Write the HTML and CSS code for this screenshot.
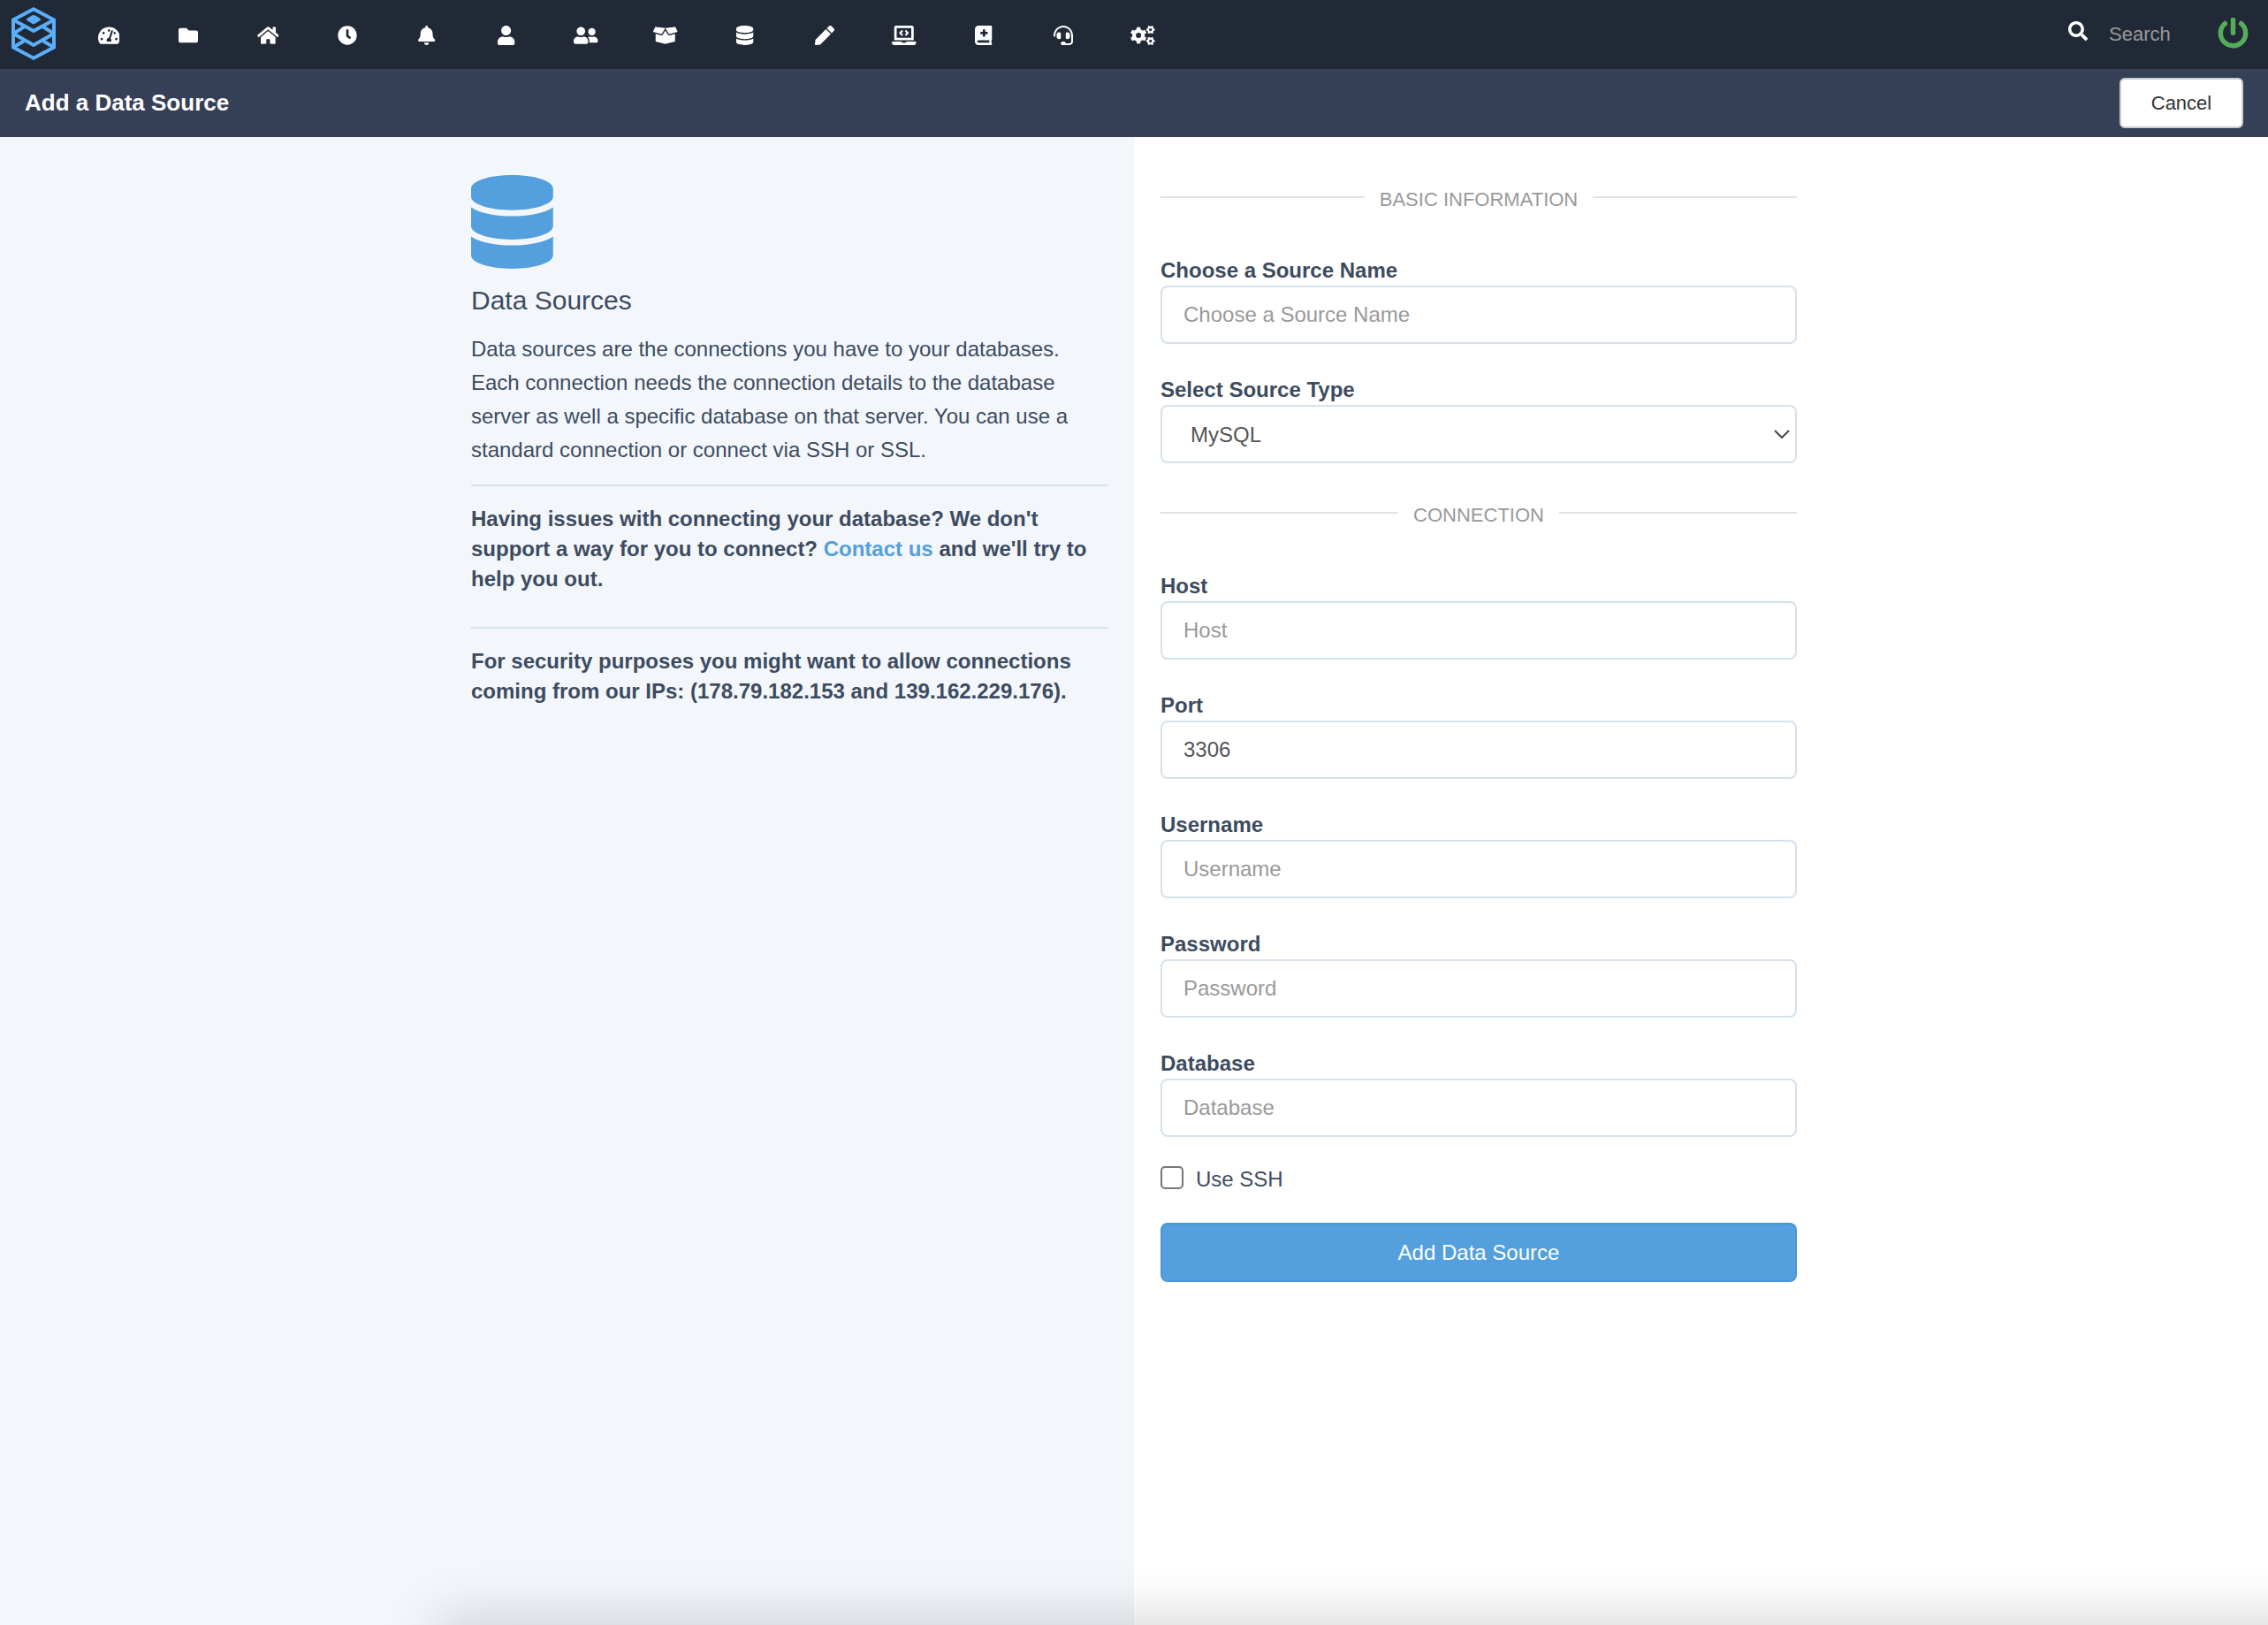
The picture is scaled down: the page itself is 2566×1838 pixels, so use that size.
FILE: index.html
```
<!DOCTYPE html>
<html lang="en">
<head>
    <meta charset="UTF-8">
    <meta name="viewport" content="width=device-width, initial-scale=1.0">
    <title>Add a Data Source</title>
    <link rel="stylesheet" href="styles.css">
</head>
<body>

<header class="topbar">
    <a href="#" class="logo" aria-label="Home">
        <svg viewBox="0 0 50 60">
            <g fill="none" stroke="currentColor" stroke-width="4">
                <path d="M25 2.3L48 14.5V45.5L25 57.7L2 45.5V14.5Z"/>
                <path d="M2 14.5L25 27L48 14.5"/>
                <path d="M14 22.5L2 30L25 43L48 30L36 22.5"/>
                <path d="M14 38.5L2 45.5M36 38.5L48 45.5"/>
            </g>
            <path fill="currentColor" d="M17.5 13L23 9.6Q25 8.5 27 9.6L32.5 13Q34 14 32.5 15L27 18.6Q25 20 23 18.6L17.5 15Q16 14 17.5 13Z"/>
        </svg>
    </a>
    <nav class="main-nav">
        <a href="#" aria-label="Dashboards"><svg viewBox="0 0 576 512"><path d="M288 32C128.94 32 0 160.94 0 320c0 52.8 14.25 102.26 39.06 144.8 5.61 9.62 16.3 15.2 27.44 15.2h443c11.14 0 21.83-5.58 27.44-15.2C561.75 422.26 576 372.8 576 320c0-159.06-128.94-288-288-288zm0 64c14.71 0 26.58 10.13 30.32 23.65-1.11 2.26-2.64 4.23-3.45 6.67l-9.22 27.67c-5.13 3.49-10.97 6.01-17.64 6.01-17.67 0-32-14.33-32-32S270.33 96 288 96zM96 384c-17.67 0-32-14.33-32-32s14.33-32 32-32 32 14.33 32 32-14.33 32-32 32zm48-160c-17.67 0-32-14.33-32-32s14.33-32 32-32 32 14.33 32 32-14.33 32-32 32zm246.77-72.41l-61.33 184C343.13 347.33 352 364.54 352 384c0 11.72-3.38 22.55-8.88 32H232.88c-5.5-9.45-8.88-20.28-8.88-32 0-33.94 26.5-61.43 59.9-63.59l61.34-184.01c4.17-12.56 17.73-19.45 30.36-15.17 12.57 4.19 19.35 17.79 15.17 30.36zm14.66 57.2l15.52-46.55c3.47-1.29 7.13-2.23 11.05-2.23 17.67 0 32 14.33 32 32s-14.33 32-32 32c-11.38-.01-20.89-6.28-26.57-15.22zM480 384c-17.67 0-32-14.33-32-32s14.33-32 32-32 32 14.33 32 32-14.33 32-32 32z"/></svg></a>
        <a href="#" aria-label="Folders"><svg viewBox="0 0 512 512"><path d="M464 128H272l-64-64H48C21.49 64 0 85.49 0 112v288c0 26.51 21.49 48 48 48h416c26.51 0 48-21.49 48-48V176c0-26.51-21.49-48-48-48z"/></svg></a>
        <a href="#" aria-label="Home page"><svg viewBox="0 0 576 512"><path d="M280.37 148.26L96 300.11V464a16 16 0 0 0 16 16l112.06-.29a16 16 0 0 0 15.92-16V368a16 16 0 0 1 16-16h64a16 16 0 0 1 16 16v95.64a16 16 0 0 0 16 16.05L464 480a16 16 0 0 0 16-16V300L295.67 148.26a12.19 12.19 0 0 0-15.3 0zM571.6 251.47L488 182.56V44.05a12 12 0 0 0-12-12h-56a12 12 0 0 0-12 12v72.61L318.47 43a48 48 0 0 0-61 0L4.34 251.47a12 12 0 0 0-1.6 16.9l25.5 31A12 12 0 0 0 45.15 301l235.22-193.74a12.19 12.19 0 0 1 15.3 0L530.9 301a12 12 0 0 0 16.9-1.6l25.5-31a12 12 0 0 0-1.7-16.93z"/></svg></a>
        <a href="#" aria-label="Schedules"><svg viewBox="0 0 512 512"><path d="M256,8C119,8,8,119,8,256S119,504,256,504,504,393,504,256,393,8,256,8Zm92.49,313h0l-20,25a16,16,0,0,1-22.49,2.5h0l-67-49.72a40,40,0,0,1-15-31.23V112a16,16,0,0,1,16-16h32a16,16,0,0,1,16,16V256l58,42.5A16,16,0,0,1,348.49,321Z"/></svg></a>
        <a href="#" aria-label="Alerts"><svg viewBox="0 0 448 512"><path d="M224 512c35.32 0 63.97-28.65 63.97-64H160.03c0 35.35 28.65 64 63.97 64zm215.39-149.71c-19.32-20.76-55.47-51.99-55.47-154.29 0-77.7-54.48-139.9-127.94-155.16V32c0-17.67-14.32-32-31.98-32s-31.98 14.33-31.98 32v20.84C118.56 68.1 64.08 130.3 64.08 208c0 102.3-36.15 133.53-55.47 154.29-6 6.45-8.66 14.16-8.61 21.71.11 16.4 12.98 32 32.1 32h383.8c19.12 0 32-15.6 32.1-32 .05-7.55-2.61-15.27-8.61-21.71z"/></svg></a>
        <a href="#" aria-label="Users"><svg viewBox="0 0 448 512"><path d="M224 256c70.7 0 128-57.3 128-128S294.7 0 224 0 96 57.3 96 128s57.3 128 128 128zm89.6 32h-16.7c-22.2 10.2-46.9 16-72.9 16s-50.6-5.8-72.9-16h-16.7C60.2 288 0 348.2 0 422.4V464c0 26.5 21.5 48 48 48h352c26.5 0 48-21.5 48-48v-41.6c0-74.2-60.2-134.4-134.4-134.4z"/></svg></a>
        <a href="#" aria-label="Groups"><svg viewBox="0 0 640 512"><path d="M192 256c61.9 0 112-50.1 112-112S253.9 32 192 32 80 82.1 80 144s50.1 112 112 112zm76.8 32h-8.3c-20.8 10-43.9 16-68.5 16s-47.6-6-68.5-16h-8.3C51.6 288 0 339.6 0 403.2V432c0 26.5 21.5 48 48 48h288c26.5 0 48-21.5 48-48v-28.8c0-63.6-51.6-115.2-115.2-115.2zM480 256c53 0 96-43 96-96s-43-96-96-96-96 43-96 96 43 96 96 96zm48 32h-3.8c-13.9 4.8-28.6 8-44.2 8s-30.3-3.2-44.2-8H432c-20.4 0-39.2 5.9-55.7 15.4 24.4 26.3 39.7 61.2 39.7 99.8v38.4c0 2.2-.5 4.3-.6 6.4H592c26.5 0 48-21.5 48-48 0-61.9-50.1-112-112-112z"/></svg></a>
        <a href="#" aria-label="Packages"><svg viewBox="0 0 640 512"><path d="M425.7 256c-16.9 0-32.8-9-41.4-23.4L320 126l-64.2 106.6c-8.7 14.5-24.6 23.5-41.5 23.5-4.5 0-9-.6-13.3-1.9L64 215v178c0 14.7 10 27.5 24.2 31l216.2 54.1c10.2 2.5 20.9 2.5 31 0L551.8 424c14.2-3.6 24.2-16.4 24.2-31V215l-137 39.1c-4.3 1.3-8.8 1.9-13.3 1.9zm212.6-112.2L586.8 41c-3.1-6.2-9.8-9.8-16.7-8.9L320 64l91.7 152.1c3.8 6.3 11.4 9.3 18.5 7.3l197.9-56.5c9.9-2.9 14.7-13.9 10.2-23.1zM53.2 41L1.7 143.8c-4.6 9.2.3 20.2 10.1 23l197.9 56.5c7.1 2 14.7-1 18.5-7.3L320 64 69.8 32.1c-6.9-.8-13.5 2.7-16.6 8.9z"/></svg></a>
        <a href="#" aria-label="Data sources"><svg viewBox="0 0 448 512"><path d="M448 73.143v45.714C448 159.143 347.667 192 224 192S0 159.143 0 118.857V73.143C0 32.857 100.333 0 224 0s224 32.857 224 73.143zM448 176v102.857C448 319.143 347.667 352 224 352S0 319.143 0 278.857V176c48.125 33.143 136.208 48.572 224 48.572S399.874 209.143 448 176zm0 160v102.857C448 479.143 347.667 512 224 512S0 479.143 0 438.857V336c48.125 33.143 136.208 48.572 224 48.572S399.874 369.143 448 336z"/></svg></a>
        <a href="#" aria-label="Editor"><svg viewBox="0 0 512 512"><path d="M290.74 93.24l128.02 128.02-277.99 277.99-114.14 12.6C11.35 513.54-1.56 500.62.14 485.34l12.7-114.22 277.9-277.88zm207.2-19.06l-60.11-60.11c-18.75-18.75-49.16-18.75-67.91 0l-56.55 56.55 128.02 128.02 56.55-56.55c18.75-18.76 18.75-49.16 0-67.91z"/></svg></a>
        <a href="#" aria-label="Embedding"><svg viewBox="0 0 640 512"><path d="M255.03 261.65c6.25 6.25 16.38 6.25 22.63 0l11.31-11.31c6.25-6.25 6.25-16.38 0-22.63L253.25 192l35.71-35.72c6.25-6.25 6.25-16.38 0-22.63l-11.31-11.31c-6.25-6.25-16.38-6.25-22.63 0l-58.34 58.34c-6.25 6.25-6.25 16.38 0 22.63l58.35 58.34zm96.01-11.3l11.31 11.31c6.25 6.25 16.38 6.25 22.63 0l58.34-58.34c6.25-6.25 6.25-16.38 0-22.63l-58.34-58.34c-6.25-6.25-16.38-6.25-22.63 0l-11.31 11.31c-6.25 6.25-6.25 16.38 0 22.63L386.75 192l-35.71 35.72c-6.25 6.25-6.25 16.38 0 22.63zM624 416H381.54c-.74 19.81-14.71 32-32.74 32H288c-18.69 0-33.02-17.47-32.77-32H16c-8.8 0-16 7.2-16 16v16c0 35.2 28.8 64 64 64h512c35.2 0 64-28.8 64-64v-16c0-8.8-7.2-16-16-16zM576 48c0-26.4-21.6-48-48-48H112C85.6 0 64 21.6 64 48v336h512V48zm-64 272H128V64h384v256z"/></svg></a>
        <a href="#" aria-label="Documentation"><svg viewBox="0 0 448 512"><path d="M448 358.4V25.6c0-16-9.6-25.6-25.6-25.6H96C41.6 0 0 41.6 0 96v320c0 54.4 41.6 96 96 96h326.4c12.8 0 25.6-9.6 25.6-25.6v-16q0-9.6-9.6-19.2c-3.2-16-3.2-60.8 0-73.6q9.6-4.8 9.6-19.2zM144 168a8 8 0 0 1 8-8h56v-56a8 8 0 0 1 8-8h48a8 8 0 0 1 8 8v56h56a8 8 0 0 1 8 8v48a8 8 0 0 1-8 8h-56v56a8 8 0 0 1-8 8h-48a8 8 0 0 1-8-8v-56h-56a8 8 0 0 1-8-8zm236.8 280H96c-16 0-32-12.8-32-32s12.8-32 32-32h284.8z"/></svg></a>
        <a href="#" aria-label="Support"><svg viewBox="0 0 512 512"><path d="M192 208c0-17.67-14.33-32-32-32h-16c-35.35 0-64 28.65-64 64v48c0 35.35 28.65 64 64 64h16c17.67 0 32-14.33 32-32V208zm176 144c35.35 0 64-28.65 64-64v-48c0-35.35-28.65-64-64-64h-16c-17.67 0-32 14.33-32 32v112c0 17.67 14.33 32 32 32h16zM256 0C113.18 0 4.58 118.83 0 256v16c0 8.84 7.16 16 16 16h16c8.84 0 16-7.16 16-16v-16c0-114.69 93.31-208 208-208s208 93.31 208 208h-.12c.08 2.43.12 165.72.12 165.72 0 23.35-18.93 42.28-42.28 42.28H320c0-26.51-21.49-48-48-48h-32c-26.51 0-48 21.49-48 48s21.49 48 48 48h181.72c49.86 0 90.28-40.42 90.28-90.28V256C507.42 118.83 398.82 0 256 0z"/></svg></a>
        <a href="#" aria-label="Settings">
            <svg viewBox="0 0 640 512">
                <defs>
                    <g id="gear">
                        <circle r="118" fill="none" stroke="currentColor" stroke-width="96"/>
                        <rect x="-50" y="-216" width="100" height="80" rx="20"/>
                        <rect x="-50" y="-216" width="100" height="80" rx="20" transform="rotate(60)"/>
                        <rect x="-50" y="-216" width="100" height="80" rx="20" transform="rotate(120)"/>
                        <rect x="-50" y="-216" width="100" height="80" rx="20" transform="rotate(180)"/>
                        <rect x="-50" y="-216" width="100" height="80" rx="20" transform="rotate(240)"/>
                        <rect x="-50" y="-216" width="100" height="80" rx="20" transform="rotate(300)"/>
                    </g>
                </defs>
                <use href="#gear" transform="translate(212 256)"/>
                <use href="#gear" transform="translate(528 106) rotate(30) scale(.52)"/>
                <use href="#gear" transform="translate(528 406) rotate(30) scale(.52)"/>
            </svg>
        </a>
    </nav>
    <form class="search">
        <label for="search" aria-label="Search"><svg viewBox="0 0 512 512"><path d="M505 442.7L405.3 343c-4.5-4.5-10.6-7-17-7H372c27.6-35.3 44-79.7 44-128C416 93.1 322.9 0 208 0S0 93.1 0 208s93.1 208 208 208c48.3 0 92.7-16.4 128-44v16.3c0 6.4 2.5 12.5 7 17l99.7 99.7c9.4 9.4 24.6 9.4 33.9 0l28.3-28.3c9.4-9.4 9.4-24.6.1-34zM208 336c-70.7 0-128-57.2-128-128 0-70.7 57.2-128 128-128 70.7 0 128 57.2 128 128 0 70.7-57.2 128-128 128z"/></svg></label>
        <input type="text" id="search" placeholder="Search">
    </form>
    <a href="#" class="logout" aria-label="Log out"><svg viewBox="0 0 512 512"><path d="M400 54.1c63 45 104 118.6 104 201.9 0 136.8-110.8 247.7-247.5 248C120 504.3 8.2 393 8 256.4 7.9 173.1 48.9 99.3 111.8 54.2c11.7-8.3 28-4.8 35 7.7L162.6 90c5.9 10.5 3.1 23.8-6.6 31-41.5 30.8-68 79.6-68 134.9-.1 92.3 74.5 168.1 168 168.1 91.6 0 168.6-74.2 168-169.1-.3-51.8-24.7-101.8-68.1-134-9.7-7.2-12.4-20.5-6.5-30.9l15.8-28.1c7-12.4 23.2-16.1 34.8-7.8zM296 264V24c0-13.3-10.7-24-24-24h-32c-13.3 0-24 10.7-24 24v240c0 13.3 10.7 24 24 24h32c13.3 0 24-10.7 24-24z"/></svg></a>
</header>

<div class="page-bar">
    <h1>Add a Data Source</h1>
    <button type="button" class="btn-cancel">Cancel</button>
</div>

<main class="columns">
    <section class="info">
        <div class="info-body">
            <svg class="info-icon" viewBox="0 0 448 512"><path d="M448 73.143v45.714C448 159.143 347.667 192 224 192S0 159.143 0 118.857V73.143C0 32.857 100.333 0 224 0s224 32.857 224 73.143zM448 176v102.857C448 319.143 347.667 352 224 352S0 319.143 0 278.857V176c48.125 33.143 136.208 48.572 224 48.572S399.874 209.143 448 176zm0 160v102.857C448 479.143 347.667 512 224 512S0 479.143 0 438.857V336c48.125 33.143 136.208 48.572 224 48.572S399.874 369.143 448 336z"/></svg>
            <h2>Data Sources</h2>
            <p>Data sources are the connections you have to your databases. Each connection needs the connection details to the database server as well a specific database on that server. You can use a standard connection or connect via SSH or SSL.</p>
            <hr>
            <p class="note">Having issues with connecting your database? We don't support a way for you to connect? <a href="#">Contact us</a> and we'll try to help you out.</p>
            <hr>
            <p class="note">For security purposes you might want to allow connections coming from our IPs: (178.79.182.153 and 139.162.229.176).</p>
        </div>
    </section>

    <section class="form-panel">
        <form class="source-form">
            <h3 class="divider">BASIC INFORMATION</h3>
            <div class="field">
                <label for="name">Choose a Source Name</label>
                <input type="text" id="name" placeholder="Choose a Source Name">
            </div>
            <div class="field">
                <label for="type">Select Source Type</label>
                <div class="select-wrap">
                    <select id="type">
                        <option>MySQL</option>
                    </select>
                    <svg viewBox="0 0 18 10"><path d="M1 1L9 9L17 1"/></svg>
                </div>
            </div>

            <h3 class="divider">CONNECTION</h3>
            <div class="field">
                <label for="host">Host</label>
                <input type="text" id="host" placeholder="Host">
            </div>
            <div class="field">
                <label for="port">Port</label>
                <input type="text" id="port" value="3306">
            </div>
            <div class="field">
                <label for="username">Username</label>
                <input type="text" id="username" placeholder="Username">
            </div>
            <div class="field">
                <label for="password">Password</label>
                <input type="password" id="password" placeholder="Password">
            </div>
            <div class="field">
                <label for="database">Database</label>
                <input type="text" id="database" placeholder="Database">
            </div>
            <div class="check">
                <input type="checkbox" id="ssh">
                <label for="ssh">Use SSH</label>
            </div>
            <button type="submit" class="btn-submit">Add Data Source</button>
        </form>
    </section>
</main>

<div class="bottom-shadow"></div>

</body>
</html>
```
FILE: styles.css
```
* {
    box-sizing: border-box;
}
body {
    margin: 0;
    min-height: 100vh;
    display: flex;
    flex-direction: column;
    font-family: 'Helvetica Neue', 'Liberation Sans', Arial, sans-serif;
    font-size: 24px;
    color: #3d4b60;
    background-color: #ffffff;
}
input, select, button {
    font-family: inherit;
}
svg {
    display: block;
    fill: currentColor;
}

/* Top bar */
.topbar {
    display: flex;
    align-items: center;
    height: 78px;
    padding: 0 22px 0 13px;
    background-color: #222936;
    color: #ffffff;
}
.logo {
    color: #5aaefa;
}
.logo svg {
    width: 50px;
    height: 60px;
    margin-bottom: 2px;
}
.main-nav {
    display: flex;
    margin-left: 15px;
}
.main-nav a {
    display: flex;
    justify-content: center;
    width: 90px;
    padding-top: 2px;
    color: #ffffff;
}
.main-nav svg {
    height: 22px;
}
.search {
    display: flex;
    align-items: center;
    margin-left: auto;
}
.search svg {
    width: 22px;
    height: 22px;
    margin-bottom: 8px;
}
.search input {
    width: 123px;
    margin-left: 24px;
    padding: 0;
    border: none;
    outline: none;
    background: transparent;
    font-size: 22px;
    color: #ffffff;
}
.search input::placeholder {
    color: #999999;
}
.logout {
    color: #54ad5a;
}
.logout svg {
    width: 35px;
    height: 35px;
    margin-bottom: 3px;
}

/* Page title bar */
.page-bar {
    display: flex;
    align-items: center;
    justify-content: space-between;
    height: 77px;
    padding: 0 28px;
    background-color: #354057;
}
.page-bar h1 {
    margin: 0;
    font-size: 26px;
    color: #ffffff;
}
.btn-cancel {
    width: 140px;
    height: 57px;
    border: 2px solid #cccccc;
    border-radius: 6px;
    background-color: #ffffff;
    font-size: 22px;
    color: #333333;
    cursor: pointer;
}

/* Two halves */
.columns {
    flex: 1;
    display: grid;
    grid-template-columns: 1fr 1fr;
}
.info {
    display: flex;
    justify-content: flex-end;
    background-color: #f3f7fc;
}
.info-body {
    width: 100%;
    max-width: 750px;
    padding: 43px 30px 0 0;
}
.info-icon {
    height: 106px;
    color: #549fde;
}
.info h2 {
    margin: 18px 0;
    font-size: 30px;
    font-weight: 500;
    line-height: 36px;
}
.info p {
    margin: 0;
    line-height: 38px;
}
.info hr {
    margin: 20px 0;
    border: none;
    border-top: 2px solid #d5e1eb;
}
.info .note {
    padding-bottom: 17px;
    font-weight: bold;
    line-height: 34px;
}
.info a {
    color: #549fde;
    text-decoration: none;
}

/* Form */
.source-form {
    display: flex;
    flex-direction: column;
    max-width: 750px;
    padding: 47px 0 40px 30px;
}
.divider {
    display: flex;
    align-items: center;
    gap: 17px;
    margin: 9px 0 48px;
    font-size: 22px;
    font-weight: 500;
    line-height: 30px;
    color: #999999;
}
.divider::before,
.divider::after {
    content: "";
    flex: 1;
    height: 2px;
    margin-bottom: 6px;
    background-color: #e2e2e2;
}
.field {
    margin-bottom: 35px;
}
.field label {
    display: block;
    font-weight: bold;
    line-height: 34px;
}
.field input,
.field select {
    display: block;
    width: 100%;
    height: 66px;
    padding: 0 24px;
    border: 2px solid #d5e1eb;
    border-radius: 8px;
    background-color: #ffffff;
    font-size: 24px;
    color: #555555;
}
.field input::placeholder {
    color: #999999;
}
.field select {
    appearance: none;
    padding: 0 32px;
}
.select-wrap {
    position: relative;
}
.select-wrap svg {
    position: absolute;
    top: 28px;
    right: 8px;
    width: 18px;
    height: 10px;
    fill: none;
    stroke: #444444;
    stroke-width: 2;
    pointer-events: none;
}
.check {
    display: flex;
    align-items: flex-start;
    gap: 14px;
    margin: -4px 0 32px;
    line-height: 34px;
}
.check input {
    appearance: none;
    width: 26px;
    height: 26px;
    margin: 2px 0 0;
    border: 2px solid #767676;
    border-radius: 5px;
    background-color: #ffffff;
}
.check input:checked {
    background-color: #549fde;
}
.btn-submit {
    width: 100%;
    height: 67px;
    border: 2px solid #4a95d8;
    border-radius: 8px;
    background-color: #549fde;
    font-size: 24px;
    color: #ffffff;
    cursor: pointer;
}

/* Soft shadow along the bottom edge */
.bottom-shadow {
    position: fixed;
    left: 500px;
    right: -100px;
    bottom: -40px;
    height: 40px;
    box-shadow: 0 0 64px 4px rgba(0, 0, 0, 0.2);
    pointer-events: none;
}
```
